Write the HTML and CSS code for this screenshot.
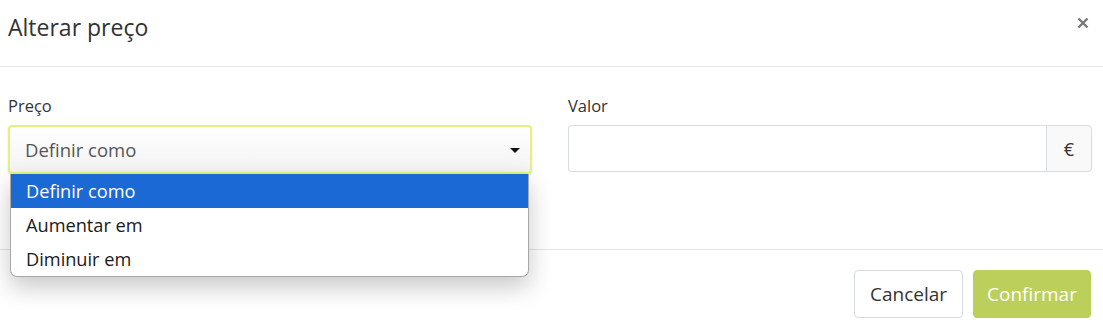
FILE: index.html
```html
<!DOCTYPE html>
<html lang="pt">
<head>
<meta charset="utf-8">
<title>Alterar preço</title>
<link rel="stylesheet" href="styles.css">
</head>
<body>
<div class="modal">
  <div class="modal-header">
    <h4 class="modal-title">Alterar preço</h4>
    <button class="close" type="button" aria-label="Fechar">
      <svg width="12" height="12" viewBox="0 0 12 12"><path d="M1.5 1.5 L10.5 10.5 M10.5 1.5 L1.5 10.5" stroke="#777" stroke-width="2.4"/></svg>
    </button>
  </div>
  <div class="modal-body">
    <div class="form-grid">
      <div class="field">
        <label class="field-label">Preço</label>
        <div class="select-wrap">
          <div class="select">
            <span class="select-value">Definir como</span>
            <span class="caret"></span>
          </div>
          <ul class="dropdown">
            <li class="option active">Definir como</li>
            <li class="option">Aumentar em</li>
            <li class="option">Diminuir em</li>
          </ul>
        </div>
      </div>
      <div class="field">
        <label class="field-label">Valor</label>
        <div class="input-group">
          <input class="input" type="text">
          <span class="addon">€</span>
        </div>
      </div>
    </div>
  </div>
  <div class="modal-footer">
    <button class="btn btn-default" type="button">Cancelar</button>
    <button class="btn btn-primary" type="button">Confirmar</button>
  </div>
</div>
</body>
</html>
```
FILE: styles.css
```css
* { box-sizing: border-box; }
html, body { margin: 0; padding: 0; background: #fff; }
body {
  font-family: "Open Sans", "Liberation Sans", sans-serif;
  color: #333;
  overflow: hidden;
}
.modal { width: 1103px; }
.modal-header {
  height: 67px;
  border-bottom: 1px solid #e5e5e5;
  display: flex;
  align-items: flex-start;
  justify-content: space-between;
  padding: 11px 14px 0 8px;
}
.modal-title {
  margin: 0;
  font-size: 23px;
  font-weight: 400;
  line-height: 32px;
  color: #333;
}
.close {
  border: 0;
  background: none;
  padding: 0;
  margin-top: 6px;
  cursor: pointer;
  display: flex;
}
.modal-body {
  height: 182px;
  padding: 28px 11px 0 8px;
}
.form-grid {
  display: grid;
  grid-template-columns: 524px 524px;
  column-gap: 36px;
}
.field-label {
  display: block;
  font-size: 16.5px;
  line-height: 22px;
  margin: 0 0 8px 0;
  color: #333;
}
.select-wrap { position: relative; }
.select {
  height: 49px;
  border: 2px solid #e2f27c;
  border-radius: 4px;
  background: linear-gradient(#ffffff, #f3f3f3);
  display: flex;
  align-items: center;
  justify-content: space-between;
  padding: 0 10px 0 15px;
  box-shadow: 0 1px 2px rgba(0,0,0,0.12);
}
.select-value { font-size: 18.5px; color: #555; }
.caret {
  width: 0; height: 0;
  border-left: 5px solid transparent;
  border-right: 5px solid transparent;
  border-top: 5px solid #111;
  margin-top: 1px;
}
.dropdown {
  position: absolute;
  left: 2px;
  top: 49px;
  width: 519px;
  margin: 0;
  padding: 0;
  list-style: none;
  background: #fff;
  border: 1px solid #a8a8a8;
  border-top: 0;
  border-radius: 0 0 7px 7px;
  box-shadow: 0 10px 24px rgba(0,0,0,0.22);
  overflow: hidden;
  z-index: 5;
}
.option {
  height: 34px;
  line-height: 34px;
  padding-left: 15px;
  font-size: 18.2px;
  color: #1a1a1a;
}
.option.active { background: #1a69d4; color: #fff; }
.input-group {
  display: flex;
  height: 47px;
  margin-top: 1px;
}
.input {
  flex: 1;
  min-width: 0;
  border: 1px solid #d6dce2;
  border-right: 0;
  border-radius: 4px 0 0 4px;
  font: inherit;
  padding: 0 12px;
  outline: none;
}
.addon {
  width: 46px;
  border: 1px solid #d6dce2;
  border-radius: 0 4px 4px 0;
  background: #f9f9f9;
  display: flex;
  align-items: center;
  justify-content: center;
  font-size: 18px;
  color: #333;
}
.modal-footer {
  display: flex;
  justify-content: flex-end;
  gap: 10px;
  padding: 20px 12px 0 0;
  border-top: 1px solid #e5e5e5;
  height: 78px;
}
.btn {
  height: 48px;
  border-radius: 4px;
  font-family: inherit;
  font-size: 19px;
  padding: 0;
  cursor: pointer;
}
.btn-default {
  width: 109px;
  background: #fff;
  border: 1px solid #d6dce2;
  color: #333;
}
.btn-primary {
  width: 118px;
  background: #bccf5a;
  border: 1px solid #bccf5a;
  color: #fff;
}
```
